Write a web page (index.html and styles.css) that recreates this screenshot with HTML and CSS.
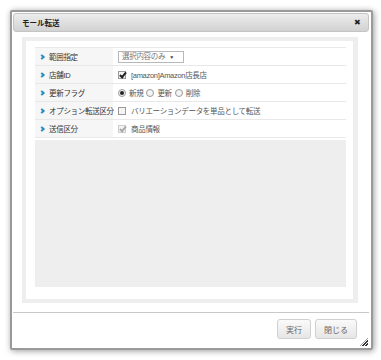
FILE: index.html
```html
<!DOCTYPE html>
<html lang="ja">
<head>
    <meta charset="UTF-8">
    <title>モール転送</title>
    <link rel="stylesheet" href="styles.css">
</head>
<body>
    <div class="dialog">
        <div class="titlebar">
            <span class="title">モール転送</span>
            <span class="close">&#x2716;</span>
        </div>
        <div class="content">
            <div class="panel">
                <table class="form">
                    <tr>
                        <th><span class="arrow"></span>範囲指定</th>
                        <td><span class="select">選択内容のみ<span class="caret">&#x25BC;</span></span></td>
                    </tr>
                    <tr>
                        <th><span class="arrow"></span>店舗ID</th>
                        <td><span class="check on"></span>[amazon]Amazon店長店</td>
                    </tr>
                    <tr>
                        <th><span class="arrow"></span>更新フラグ</th>
                        <td><span class="radio on"></span>新規<span class="radio"></span>更新<span class="radio"></span>削除</td>
                    </tr>
                    <tr>
                        <th><span class="arrow"></span>オプション転送区分</th>
                        <td><span class="check"></span>バリエーションデータを単品として転送</td>
                    </tr>
                    <tr>
                        <th><span class="arrow"></span>送信区分</th>
                        <td><span class="check on disabled"></span>商品情報</td>
                    </tr>
                </table>
                <div class="log"></div>
            </div>
        </div>
        <div class="footer">
            <button class="btn">実行</button>
            <button class="btn">閉じる</button>
            <span class="grip"></span>
        </div>
    </div>
</body>
</html>
```

FILE: styles.css
```css
body{
    margin: 0;
    padding: 10px 9px 10px 10px;
    background: #fff;
    font-family: "Liberation Sans", "Noto Sans CJK JP", sans-serif;
    font-size: 7.5px;
    color: #333;
}

.dialog{
    width: 356px;
    height: 334px;
    border: 2px solid #9a9a9a;
    border-radius: 2px;
    background: #fff;
    box-shadow: 1px 1px 6px rgba(0,0,0,0.4);
    padding: 1px 2px 1px 1px;
    display: flex;
    flex-direction: column;
}

.titlebar{
    height: 17px;
    border: 1px solid #c4c4c4;
    border-radius: 3px;
    background: linear-gradient(#ececec, #d2d2d2);
    display: flex;
    align-items: center;
    padding: 0 7px 0 8px;
}

.title{
    flex-grow: 1;
    font-weight: bold;
    font-size: 7.5px;
    color: #222;
}

.close{
    font-size: 8px;
    color: #222;
}

.content{
    padding: 5px 11px 0 9px;
}

.panel{
    box-sizing: border-box;
    height: 266px;
    border: 4px solid #eeeeee;
    border-right-width: 5px;
    padding: 6px 7px 12px 9px;
    display: flex;
    flex-direction: column;
}

.form{
    border-collapse: collapse;
    table-layout: fixed;
    width: 100%;
    letter-spacing: -0.3px;
}

.form tr{
    border-bottom: 1px solid #e8e8e8;
}

.form tr:first-child{
    border-top: 1px solid #e8e8e8;
}

.form th{
    width: 73px;
    height: 17px;
    padding: 0 0 0 5px;
    background: #f6f6f6;
    font-weight: normal;
    text-align: left;
    white-space: nowrap;
    color: #333;
}

.form td{
    padding: 0 0 0 5px;
    color: #555;
    white-space: nowrap;
}

.arrow{
    display: inline-block;
    width: 2px;
    height: 2px;
    border: solid #2a8fbd;
    border-width: 2px 2px 0 0;
    transform: rotate(45deg);
    margin: 0 5px 1px 0;
}

.select{
    display: inline-block;
    box-sizing: border-box;
    width: 66px;
    height: 12px;
    line-height: 10px;
    border: 1px solid #b8b8b8;
    padding: 0 3px;
    color: #777;
    position: relative;
}

.caret{
    position: absolute;
    right: 9px;
    top: 0;
    font-size: 5px;
    color: #444;
}

.check, .radio{
    display: inline-block;
    box-sizing: border-box;
    width: 8px;
    height: 8px;
    border: 1px solid #9a9a9a;
    background: #f4f4f4;
    vertical-align: -1px;
    margin-right: 5px;
    position: relative;
}

.radio{
    border-radius: 50%;
    margin-left: 3px;
    margin-right: 3px;
}

.radio:first-child{
    margin-left: 0;
}

.check.on::after{
    content: "";
    position: absolute;
    left: 2px;
    top: -1px;
    width: 2px;
    height: 5px;
    border: solid #222;
    border-width: 0 2px 2px 0;
    transform: rotate(40deg);
}

.check.disabled{
    border-color: #ccc;
}

.check.disabled::after{
    border-color: #aaa;
}

.radio.on::after{
    content: "";
    position: absolute;
    left: 1px;
    top: 1px;
    width: 4px;
    height: 4px;
    border-radius: 50%;
    background: #222;
}

.log{
    flex-grow: 1;
    margin-top: 2px;
    background: #eeeeee;
}

.footer{
    margin-top: 9px;
    border-top: 1px solid #c8c8c8;
    flex-grow: 1;
    display: flex;
    justify-content: flex-end;
    align-items: flex-start;
    padding: 6px 12px 0 0;
    gap: 4px;
    position: relative;
}

.btn{
    font-family: inherit;
    font-size: 8px;
    color: #666;
    height: 20px;
    padding: 0 8px;
    border: 1px solid #d0d0d0;
    border-radius: 3px;
    background: linear-gradient(#fafafa, #e6e6e6);
}

.grip{
    position: absolute;
    right: 1px;
    bottom: 1px;
    width: 8px;
    height: 8px;
    background: repeating-linear-gradient(135deg, transparent 0 1px, #333 1px 2px);
    clip-path: polygon(100% 0, 100% 100%, 0 100%);
}
```
